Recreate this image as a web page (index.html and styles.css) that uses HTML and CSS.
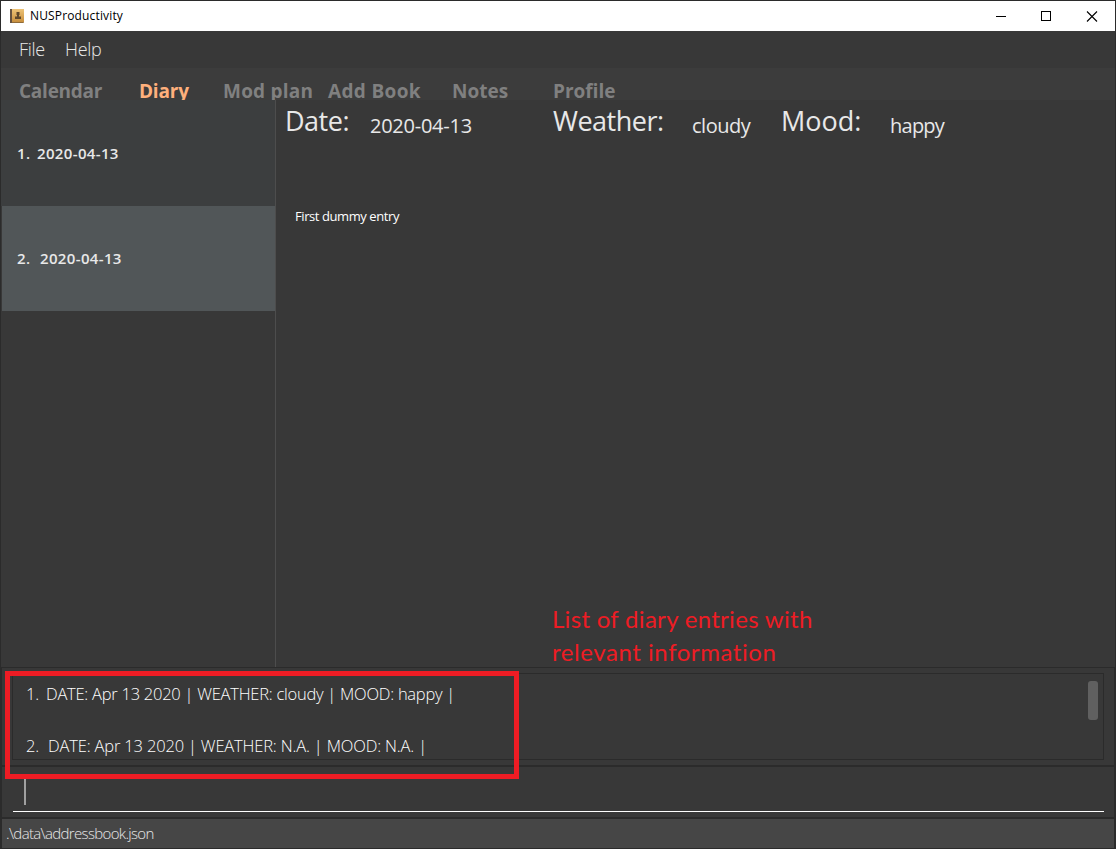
FILE: index.html
```html
<!DOCTYPE html>
<html lang="en">
<head>
<meta charset="utf-8">
<title>NUSProductivity</title>
<link rel="stylesheet" href="styles.css">
</head>
<body>
<div class="window">
  <header class="titlebar">
    <svg class="app-icon" width="14" height="14" viewBox="0 0 14 14">
      <defs><linearGradient id="cover" x1="0" y1="0" x2="0" y2="1"><stop offset="0" stop-color="#edc377"/><stop offset="1" stop-color="#c88f3e"/></linearGradient></defs>
      <rect width="14" height="14" rx="1" fill="#8f6b3a"/>
      <rect x="2" width="12" height="13" fill="url(#cover)"/>
      <rect width="2" height="14" fill="#665240"/>
      <path d="M6.500 3h3v3H9v1.500h2V10H5V7.500h2V6h-.5z" fill="#5e472b"/>
    </svg>
    <span class="title">NUSProductivity</span>
    <svg class="controls" width="102" height="11" viewBox="0 0 102 11" fill="none" stroke="#000" shape-rendering="crispEdges">
      <path d="M0 5.500h10M45.500.5h9v9h-9z"/>
      <path d="M91 .5l10 10M101 .5l-10 10" stroke-width="1.1" shape-rendering="auto"/>
    </svg>
  </header>
  <nav class="menubar"><span class="m-file">File</span><span class="m-help">Help</span></nav>
  <nav class="tabs">
    <span class="t1">Calendar</span><span class="t2 active">Diary</span><span class="t3">Mod plan</span><span class="t4">Add Book</span><span class="t5">Notes</span><span class="t6">Profile</span>
  </nav>
  <main class="content">
    <aside class="entries">
      <div class="entry"><span class="num n1">1.</span><span class="day">2020-04-13</span></div>
      <div class="entry selected"><span class="num n2">2.</span><span class="day">2020-04-13</span></div>
    </aside>
    <section class="detail">
      <div class="facts">
        <span class="label l1">Date:</span><span class="value v1">2020-04-13</span>
        <span class="label l2">Weather:</span><span class="value v2">cloudy</span>
        <span class="label l3">Mood:</span><span class="value v3">happy</span>
      </div>
      <p class="body-text">First dummy entry</p>
      <p class="note"><span class="r1">List of diary entries with</span><br><span class="r2">relevant information</span></p>
    </section>
  </main>
  <section class="results">
    <div class="results-box">
      <div class="lines">
        <div class="line o1"><span class="index">1.</span><span>DATE: Apr 13 2020 | WEATHER: cloudy | MOOD: happy |</span></div>
        <div class="line o2"><span class="index">2.</span><span>DATE: Apr 13 2020 | WEATHER: N.A. | MOOD: N.A. |</span></div>
      </div>
      <div class="thumb"></div>
    </div>
  </section>
  <section class="command"><div class="field"><i class="caret"></i></div></section>
  <footer class="status"><span class="path">.\data\addressbook.json</span></footer>
  <div class="highlight"></div>
</div>
</body>
</html>
```
FILE: styles.css
```css
* { box-sizing: border-box; }
body { margin: 0; background: #2b2b2b; font-family: "Open Sans", "Noto Sans", sans-serif; color: #e8e8e8; }
p { margin: 0; }
span, .line { white-space: nowrap; }
.window { position: relative; width: 1116px; height: 849px; padding: 1px; display: flex; flex-direction: column; overflow: hidden; background: #2b2b2b; }
.titlebar { height: 30px; flex: none; background: #fff; display: flex; align-items: center; padding: 0 17px 0 9px; }
.app-icon { margin-right: 6px; }
.title { font-size: 12px; line-height: 32px; color: #000; letter-spacing: .15px; }
.controls { margin-left: auto; }
.menubar { height: 37px; flex: none; background: #383838; display: flex; padding-left: 18px; font-size: 18px; font-weight: 300; line-height: 37px; letter-spacing: -.3px; }
.m-file { width: 46px; }
.tabs { height: 32px; flex: none; background: #3c3c3c; display: flex; padding: 8px 0 0 18px; overflow: hidden; font-size: 19px; font-weight: 700; line-height: 30px; color: #808080; }
.tabs span { flex: none; }
.tabs .active { color: #ffb07c; }
.t1 { width: 120px; letter-spacing: -.25px; } .t2 { width: 84px; letter-spacing: -.2px; } .t3 { width: 105px; letter-spacing: .22px; } .t4 { width: 124px; letter-spacing: .35px; } .t5 { width: 101px; }
.content { height: 567px; flex: none; display: flex; background: #383838; }
.entries { width: 275px; flex: none; border-right: 1px solid #4d4d4d; }
.entry { height: 106px; display: flex; padding-left: 16px; line-height: 106px; background: #3c3e3f; font-size: 15px; font-weight: 600; letter-spacing: .35px; }
.entry.selected { height: 105px; margin-left: 1px; padding-left: 15px; line-height: 105px; background: #515658; }
.n1 { width: 20px; } .n2 { width: 23px; }
.detail { flex: 1; display: flex; flex-direction: column; }
.facts { height: 45px; display: flex; padding-left: 9px; }
.label { font-size: 27px; line-height: 42px; }
.value { font-size: 20px; line-height: 51px; }
.l1 { width: 85px; letter-spacing: -.5px; } .v1 { width: 183px; letter-spacing: -.25px; } .l2 { width: 139px; letter-spacing: -.5px; } .v2 { width: 89px; letter-spacing: -.5px; } .l3 { width: 109px; } .v3 { letter-spacing: -.75px; }
.body-text { padding: 60px 0 0 19px; font-size: 13px; line-height: 22px; color: #fff; letter-spacing: -.42px; }
.note { margin-top: auto; padding-left: 276px; color: #ee1c24; font-family: Lato, sans-serif; font-size: 24px; line-height: 33px; height: 65px; font-variant-ligatures: none; }
.r1 { letter-spacing: .3px; } .r2 { letter-spacing: .56px; }
.results { height: 97px; margin: 1px 1px 0; flex: none; background: #383838; padding: 5px 10px 5px 10px; }
.results-box { height: 87px; border: 1px solid #2b2b2b; display: flex; justify-content: space-between; padding: 7px 5px 0 13px; }
.line { height: 52px; display: flex; line-height: 26px; font-size: 16.5px; font-weight: 300; color: #fff; letter-spacing: -.25px; font-kerning: none; }
.line.o2 { letter-spacing: -.17px; }
.o1 .index { width: 20px; } .o2 .index { width: 22px; }
.lines { height: 78px; overflow: hidden; }
.thumb { width: 10px; height: 39px; border-radius: 3px; background: #606060; }
.command { height: 50px; margin: 2px 1px 0; flex: none; background: #383838; padding: 0 10px 0 11px; }
.field { height: 45px; border-bottom: 1px solid #fff; padding: 12px 0 0 11px; }
.caret { display: block; width: 2px; height: 26px; background: #a0a0a0; }
.status { height: 29px; margin: 2px 1px 0; flex: none; background: #464646; padding-left: 4px; font-size: 15px; font-weight: 300; line-height: 29px; letter-spacing: -.66px; }
.highlight { position: absolute; left: 5px; top: 671px; width: 514px; height: 108px; border: 5px solid #ee1c24; }
```
